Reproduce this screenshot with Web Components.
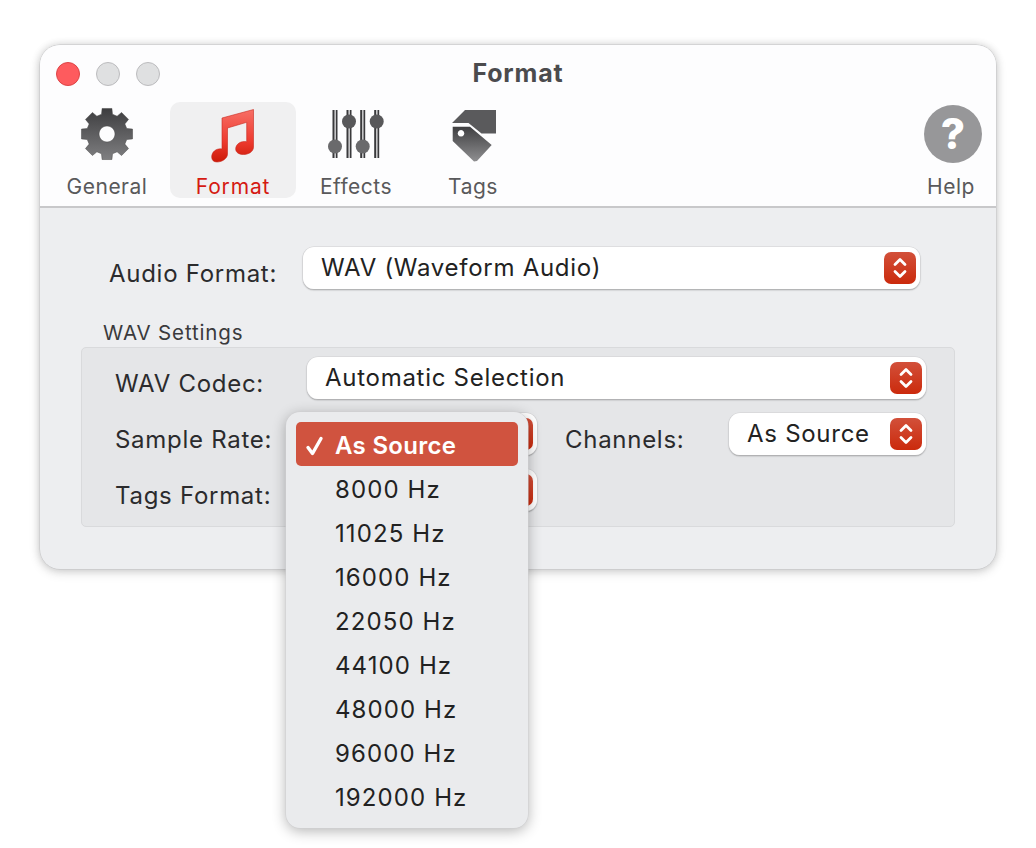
<!DOCTYPE html>
<html lang="en"><head><meta charset="utf-8"><title>Format</title>
<style>
html,body{margin:0;background:#fff;}
body{width:1036px;height:848px;overflow:hidden;padding:45px 0 0 40px;box-sizing:border-box;font-family:Inter,"Liberation Sans",sans-serif;color:#222;}
</style></head><body>
<template id="t-window"><style>
:host{display:block;position:relative;width:956px;height:524px;border-radius:20px;background:#edeef0;box-shadow:0 0 0 .5px #c4c4c6,0 0 9px rgba(0,0,0,.16),0 3px 12px rgba(0,0,0,.14);}
.top{background:#fdfdfe;border-radius:20px 20px 0 0;border-bottom:2px solid #c8c8ca;height:161px;position:relative;}
.lights{display:flex;gap:16px;padding:17px 0 0 16px;height:24px;}
.l{width:22px;height:22px;border-radius:50%;background:#dfe0e1;border:1px solid #bcbcbe;}
.l.red{background:#fe5b5e;border-color:#dd4446;}
h1{position:absolute;left:0;right:0;top:12px;margin:0;text-align:center;font:700 25px/32px Inter,"Liberation Sans",sans-serif;color:#4b4b4d;letter-spacing:.85px;}
.tools{display:flex;margin-top:16px;padding-left:7px;}
.body{padding:39px 41px 0 41px;}
</style>
<div class="top"><div class="lights"><span class="l red"></span><span class="l"></span><span class="l"></span></div><h1>Format</h1><div class="tools"><slot name="tools"></slot></div></div>
<div class="body"><slot></slot></div><slot name="overlay"></slot></template>

<template id="t-tool"><style>
:host{display:block;height:96px;box-sizing:border-box;border-radius:10px;text-align:center;color:#59595b;}
:host([active]){background:#f0f0f1;color:#d51a12;}
.i{height:64px;display:flex;align-items:center;justify-content:center;}
.t{font:400 21px/22px Inter,"Liberation Sans",sans-serif;letter-spacing:.5px;margin-top:10px;}
:host([active]) .t{letter-spacing:.85px;}
::slotted(svg){display:block;}
</style><div class="i"><slot></slot></div><div class="t"></div></template>

<template id="t-select"><style>
:host{display:flex;align-items:center;box-sizing:border-box;height:42px;border-radius:11px;background:#fff;box-shadow:0 0 0 .5px #d2d2d4,0 1px 1.5px rgba(0,0,0,.45);padding:0 4px 0 18px;font:400 24px/30px Inter,"Liberation Sans",sans-serif;color:#222;letter-spacing:.72px;}
.v{flex:1;white-space:nowrap;position:relative;}
.s{width:32px;height:32px;border-radius:7px;background:linear-gradient(#d2503a,#cb2a0c);display:flex;align-items:center;justify-content:center;flex:none;}
</style><div class="v"><slot></slot></div><div class="s"><svg width="18" height="26" viewBox="0 0 18 26" fill="none" stroke="#fff" stroke-width="2.8" stroke-linecap="round" stroke-linejoin="round"><path d="M4 9.500 9 4.500 14 9.500M4 16.500 9 21.500 14 16.500"/></svg></div></template>

<template id="t-label"><style>
:host{display:block;font:400 24px/30px Inter,"Liberation Sans",sans-serif;color:#2b2b2d;letter-spacing:.72px;white-space:nowrap;position:relative;top:12px;}
</style><slot></slot></template>

<template id="t-top"><style>
:host{display:grid;grid-template-columns:222px 617px;}
.a{padding-left:28px;}
</style><div class="a"><slot name="label"></slot></div><slot></slot></template>

<template id="t-group"><style>
:host{display:block;margin:28px 0 0 0;}
.cap{font:400 20.500px/26px Inter,"Liberation Sans",sans-serif;color:#3a3a3c;letter-spacing:.85px;padding-left:22px;height:30px;position:relative;}
.cap span{position:relative;top:3px;}
.box{box-sizing:border-box;height:180px;border:1px solid #d9dadc;border-radius:5px;background:#e5e6e8;padding:9px 28px 0 33px;display:grid;grid-template-columns:192px 230px 28px 164px 197px;grid-template-rows:42px 42px 42px;row-gap:14px;align-items:start;}
</style><div class="cap"><span><slot name="caption"></slot></span></div><div class="box"><slot></slot></div></template>

<template id="t-menu"><style>
:host{position:absolute;left:246px;top:367px;width:242px;height:416px;box-sizing:border-box;padding:10px;border-radius:14px;background:#eaebed;box-shadow:0 0 0 .5px #cfcfd1,0 3px 14px rgba(0,0,0,.3);display:flex;flex-direction:column;}
</style><slot></slot></template>

<template id="t-item"><style>
:host{display:flex;align-items:center;height:44px;flex:none;box-sizing:border-box;padding-left:39px;font:400 24px/30px Inter,"Liberation Sans",sans-serif;color:#222;letter-spacing:1.1px;border-radius:5px;position:relative;}
.x{position:relative;top:2px;}
:host([selected]){background:#d0533f;color:#fff;font-weight:600;letter-spacing:.3px;}
.c{position:absolute;left:9px;top:13px;display:none;}
:host([selected]) .c{display:block;}
</style><svg class="c" width="20" height="22" viewBox="0 0 20 22" fill="none" stroke="#fff" stroke-width="3.400" stroke-linecap="round" stroke-linejoin="round"><path d="M3 12.500 7.500 18.500 16 3.500"/></svg><span class="x"><slot></slot></span></template>

<app-window>
  <tool-item slot="tools" label="General" style="width:120px;margin-right:3px">
    <svg width="60" height="60" viewBox="0 0 60 60"><defs><linearGradient id="gg" x1="0" y1="0" x2="0" y2="1"><stop offset="0" stop-color="#3d3d3f"/><stop offset="1" stop-color="#7f7f81"/></linearGradient></defs><path id="gear" fill="url(#gg)" fill-rule="evenodd" stroke="#444" stroke-width=".5"/></svg>
  </tool-item>
  <tool-item slot="tools" label="Format" active style="width:126px">
    <svg width="60" height="60" viewBox="203 104 60 60"><defs><linearGradient id="ng" x1="0" y1="0" x2="0" y2="1"><stop offset="0" stop-color="#f76f66"/><stop offset=".6" stop-color="#ee3b30"/><stop offset="1" stop-color="#cc1a08"/></linearGradient></defs>
      <path fill="url(#ng)" stroke="#c8291e" stroke-width=".6" d="M222 118 253.500 109.500V147C253.500 152 248 154.500 243.500 154.500 239 154.500 235.700 152.500 235.700 149 235.700 144 241 140.500 246.700 141.800V122.300L227.500 128V154C227.500 158.500 222 162 217 162 213.500 162 211.700 160 211.700 157 211.700 152 216 148 222 149Z"/></svg>
  </tool-item>
  <tool-item slot="tools" label="Effects" style="width:120px">
    <svg width="60" height="60" viewBox="326 104 60 60" fill="#3a3a3c"><path d="M332.500 110h5v48h-5zM346.500 110h5v48h-5zM360.200 110h5v48h-5zM374.200 110h5v48h-5z"/><path fill="#e8e8e9" d="M334.500 110h1.300v48h-1.300zM348.500 110h1.300v48h-1.300zM362.200 110h1.300v48h-1.300zM376.200 110h1.300v48h-1.300z"/><circle cx="335" cy="146.500" r="7" fill="#6a6a6c"/><circle cx="349" cy="121.500" r="7" fill="#58585a"/><circle cx="362.700" cy="146.500" r="7" fill="#6a6a6c"/><circle cx="376.700" cy="121.500" r="7" fill="#58585a"/></svg>
  </tool-item>
  <tool-item slot="tools" label="Tags" style="width:114px">
    <svg width="60" height="60" viewBox="443 104 60 60"><defs><linearGradient id="tg" x1="0" y1="0" x2="0" y2="1"><stop offset="0" stop-color="#3f3f41"/><stop offset="1" stop-color="#8f8f91"/></linearGradient></defs><path fill="#5a5a5c" d="M452 123 465 110H496V133.500H481.500L468.500 123Z"/><path fill="url(#tg)" fill-rule="evenodd" d="M452.700 126.700H470L491.700 145 477 161 474 161.500 452.700 141ZM461 130a3.300 3.300 0 1 0 .01 0Z"/></svg>
  </tool-item>
  <tool-item slot="tools" label="Help" style="width:90px;margin-left:auto">
    <help-icon></help-icon>
  </tool-item>

  <top-row><form-label slot="label">Audio Format:</form-label><pop-select>WAV (Waveform Audio)</pop-select></top-row>
  <settings-group>
    <span slot="caption">WAV Settings</span>
    <form-label>WAV Codec:</form-label><pop-select style="grid-column:2 / 6">Automatic Selection</pop-select>
    <form-label>Sample Rate:</form-label><pop-select></pop-select><span></span><form-label>Channels:</form-label><pop-select>As Source</pop-select>
    <form-label>Tags Format:</form-label><pop-select></pop-select>
  </settings-group>

  <pop-menu slot="overlay">
    <menu-row selected>As Source</menu-row>
    <menu-row>8000 Hz</menu-row><menu-row>11025 Hz</menu-row><menu-row>16000 Hz</menu-row><menu-row>22050 Hz</menu-row><menu-row>44100 Hz</menu-row><menu-row>48000 Hz</menu-row><menu-row>96000 Hz</menu-row><menu-row>192000 Hz</menu-row>
  </pop-menu>
</app-window>
<script>
function reg(name,tpl){customElements.define(name,class extends HTMLElement{constructor(){super();this.attachShadow({mode:"open"}).appendChild(document.getElementById(tpl).content.cloneNode(true));}});}
reg("app-window","t-window");
reg("tool-item","t-tool");
reg("pop-select","t-select");
reg("form-label","t-label");
reg("top-row","t-top");
reg("settings-group","t-group");
reg("pop-menu","t-menu");
reg("menu-row","t-item");
customElements.define("help-icon",class extends HTMLElement{constructor(){super();this.attachShadow({mode:"open"}).innerHTML='<style>:host{display:flex;width:58px;height:58px;border-radius:50%;background:#979799;color:#fff;align-items:center;justify-content:center;font:800 42px/58px Inter,"Liberation Sans",sans-serif;position:relative;left:2px;}</style>?';}});
document.querySelectorAll("tool-item").forEach(t=>{t.shadowRoot.querySelector(".t").textContent=t.getAttribute("label");});
(function(){const c=30,ro=26,ri=20.5,n=8,p=[];const pt=(r,a)=>(c+r*Math.sin(a)).toFixed(2)+" "+(c-r*Math.cos(a)).toFixed(2);
for(let i=0;i<n;i++){const a=i*2*Math.PI/n;p.push(pt(ri,a-.27),pt(ro,a-.19),pt(ro,a+.19),pt(ri,a+.27));}
document.getElementById("gear").setAttribute("d","M"+p.join("L")+"ZM30 22a8 8 0 1 0 .01 0Z");})();
</script>
</body></html>
